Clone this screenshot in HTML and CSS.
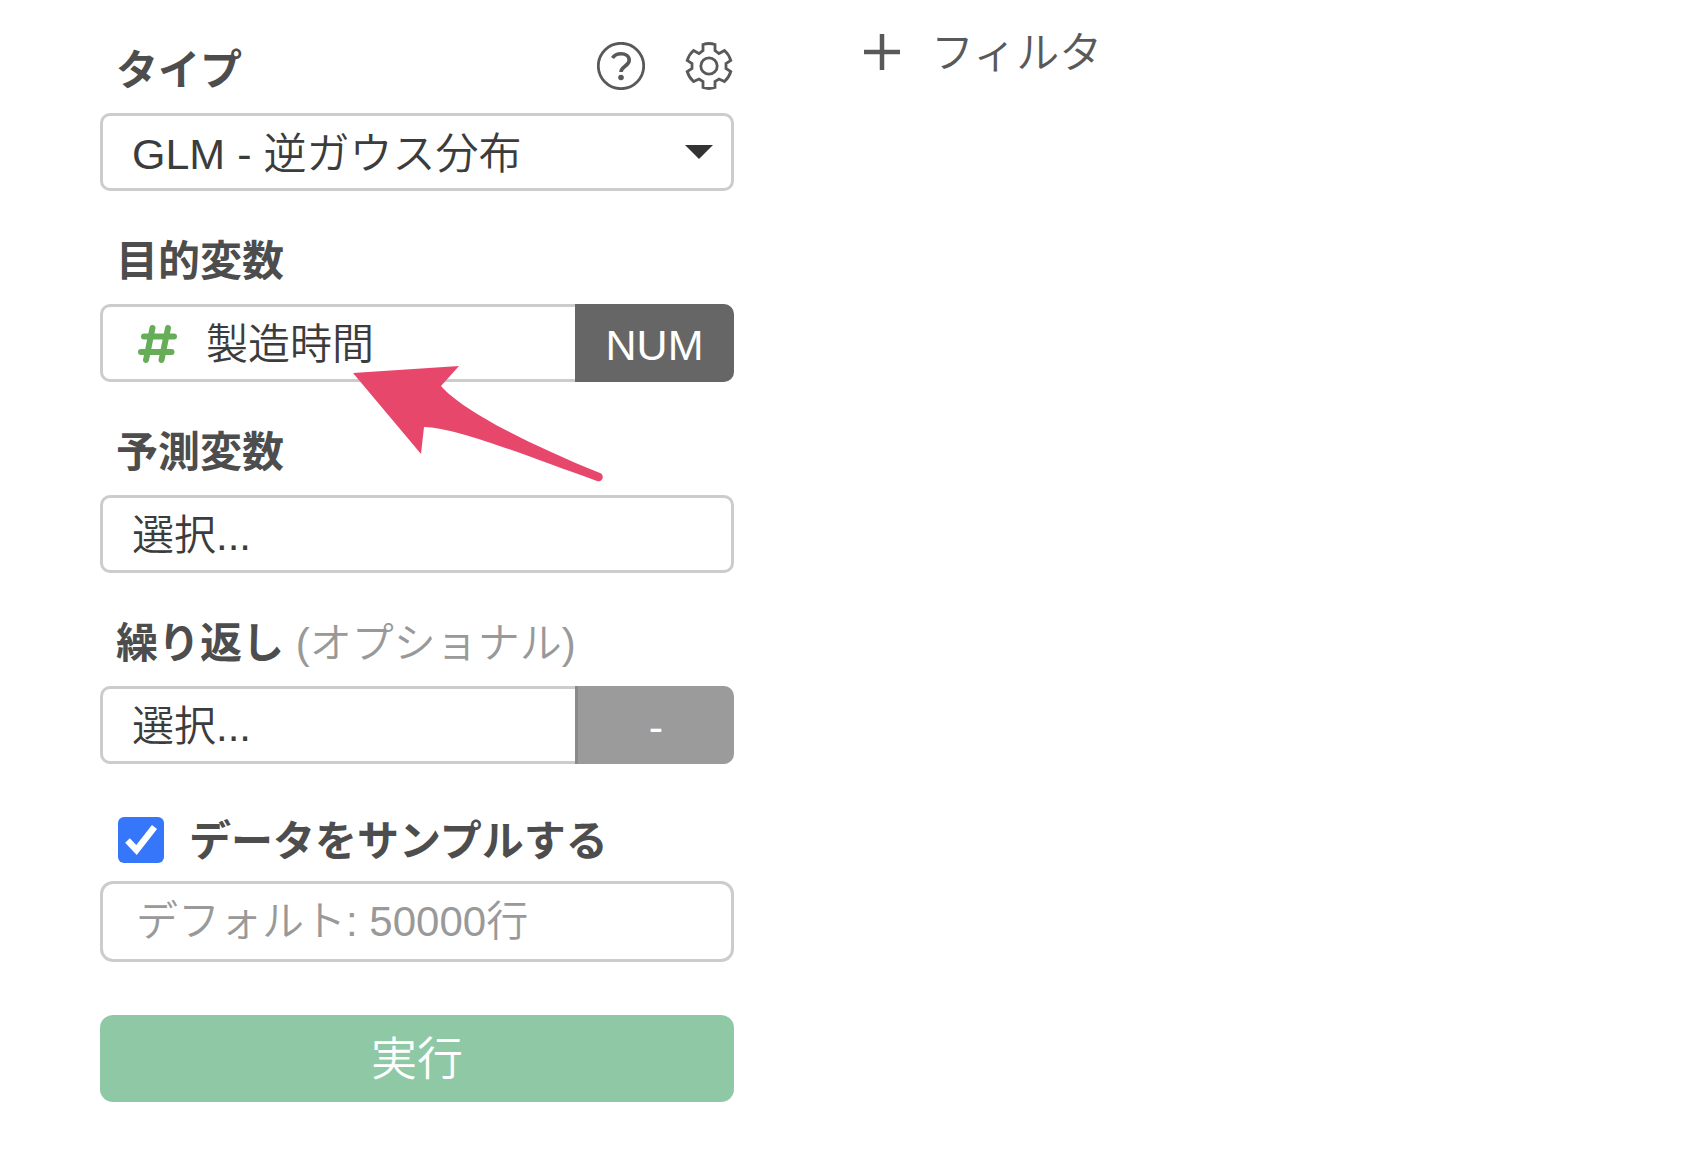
FILE: index.html
```html
<!DOCTYPE html>
<html lang="ja">
<head>
    <meta charset="UTF-8">
    <meta name="viewport" content="width=device-width, initial-scale=1.0">
    <title>GLM - 逆ガウス分布</title>
    <link rel="stylesheet" href="styles.css">
</head>
<body>
    <main class="page">
        <form class="panel">
            <div class="field">
                <div class="label-row">
                    <label class="label" for="type">タイプ</label>
                    <div class="tools">
                        <button type="button" class="icon-button" aria-label="ヘルプ">
                            <svg class="icon" viewBox="0 0 48 48">
                                <circle cx="24" cy="24" r="22.700"/>
                                <path d="M15.500 16C17.500 13 20.500 11.800 24 11.800C28.500 11.800 32.200 14.200 32.200 18.200C32.200 24 24 24.500 24 30" stroke-width="3.600"/>
                                <circle cx="24" cy="35.500" r="2.800" class="solid"/>
                            </svg>
                        </button>
                        <button type="button" class="icon-button" aria-label="設定">
                            <svg class="icon" viewBox="0 0 48 48">
                                <path d="M18 2.500Q24 .5 30 2.500V8.500L34 11.500L39.500 8.500Q44 12.500 45.800 18.500L41 21.500V26.500L45.800 29.500Q44 35.500 39.500 39.500L34 37L30 39.500V45.500Q24 47.500 18 45.500V39.500L14 37L8.500 39.500Q4 35.500 2.200 29.500L7 26.500V21.500L2.200 18.500Q4 12.500 8.500 8.500L14 11.500L18 8.500Z"/>
                                <circle cx="24" cy="24" r="8.200"/>
                            </svg>
                        </button>
                    </div>
                </div>
                <div class="select-wrap">
                    <select id="type" class="control">
                        <option>GLM - 逆ガウス分布</option>
                    </select>
                    <svg class="caret" viewBox="0 0 28 14"><path d="M0 0H28L14 14Z"/></svg>
                </div>
            </div>

            <div class="field">
                <div class="label-row">
                    <label class="label" for="target">目的変数</label>
                </div>
                <div class="group">
                    <button type="button" id="target" class="control column" aria-haspopup="listbox">
                        <svg class="hash" viewBox="0 0 40 40"><path d="M15.500 3L9 35M31 3L24.500 35M7 11.500H37M4 27H34.500"/></svg>
                        <span>製造時間</span>
                    </button>
                    <button type="button" class="tag">NUM</button>
                </div>
                <!-- pointer to the selected column -->
                <svg class="arrow" viewBox="0 0 252 118">
                    <path d="M0 7L106 0L88 20C108 43 168 75 247 107A4 4 0 0 1 244 115C168 88 105 62 71 61L68 88Z"/>
                </svg>
            </div>

            <div class="field">
                <div class="label-row">
                    <label class="label" for="predictors">予測変数</label>
                </div>
                <select id="predictors" class="control">
                    <option>選択...</option>
                </select>
            </div>

            <div class="field">
                <div class="label-row">
                    <label class="label" for="repeat">繰り返し <span class="optional">(オプショナル)</span></label>
                </div>
                <div class="group">
                    <select id="repeat" class="control">
                        <option>選択...</option>
                    </select>
                    <button type="button" class="tag tag-empty">-</button>
                </div>
            </div>

            <div class="field">
                <div class="check-row">
                    <span class="check">
                        <input type="checkbox" id="sample" checked>
                        <svg viewBox="0 0 46 46"><path d="M9.500 23.500L18.500 33L36.500 10"/></svg>
                    </span>
                    <label class="label" for="sample">データをサンプルする</label>
                </div>
                <input type="text" class="control rows" placeholder="デフォルト: 50000行" aria-label="行数">
            </div>

            <button type="submit" class="run">実行</button>
        </form>

        <section class="content">
            <button type="button" class="filter">
                <svg class="plus" viewBox="0 0 36 36"><path d="M18 0V36M0 18H36"/></svg>
                <span>フィルタ</span>
            </button>
        </section>
    </main>
</body>
</html>
```
FILE: styles.css
```css
* {
    box-sizing: border-box;
}
body {
    margin: 0;
    background-color: #fff;
    color: #3c3c3c;
    font-family: "Liberation Sans", "Noto Sans CJK JP", sans-serif;
    font-size: 42px;
    line-height: 48px;
}
button,
input,
select {
    font: inherit;
    color: inherit;
    margin: 0;
}
button {
    border: none;
    background: none;
    padding: 0;
    cursor: pointer;
}
.page {
    display: grid;
    grid-template-columns: minmax(0, 634px) 1fr;
    gap: 130px;
    padding: 0 100px 66px;
}
.panel {
    padding-top: 42px;
}
.field {
    position: relative;
    margin-bottom: 42px;
}
.label-row {
    display: flex;
    align-items: flex-end;
    justify-content: space-between;
    height: 53px;
    margin-bottom: 18px;
    padding: 0 1px 0 16px;
}
.label {
    color: #4d4d4d;
    font-weight: bold;
    white-space: nowrap;
}
.optional {
    color: #999;
    font-weight: 350;
}
.tools {
    display: flex;
    align-self: flex-start;
    gap: 40px;
}
.icon-button {
    display: flex;
}
.icon {
    width: 48px;
    height: 48px;
    fill: none;
    stroke: #595959;
    stroke-width: 2.8;
}
.icon .solid {
    fill: #595959;
    stroke: none;
}
.control {
    display: block;
    appearance: none;
    width: 100%;
    height: 78px;
    padding: 3px 29px 0;
    border: 3px solid #ccc;
    border-radius: 10px;
    background-color: #fff;
    font-weight: 350;
}
.select-wrap {
    position: relative;
}
.select-wrap .control {
    font-size: 43px;
}
.caret {
    position: absolute;
    top: 32px;
    right: 21px;
    width: 28px;
    height: 14px;
    fill: #333;
    pointer-events: none;
}
.group {
    display: flex;
}
.group .control {
    flex: 1;
    min-width: 0;
    border-right: none;
    border-radius: 10px 0 0 10px;
}
.column {
    display: flex;
    align-items: center;
    gap: 29px;
    padding-left: 34px;
}
.hash {
    width: 40px;
    height: 40px;
    fill: none;
    stroke: #65ad56;
    stroke-width: 6;
    stroke-linecap: round;
}
.tag {
    width: 159px;
    height: 78px;
    padding-top: 3px;
    border-radius: 0 10px 10px 0;
    background-color: #666;
    color: #fff;
    font-size: 43px;
}
.tag-empty {
    border-left: 3px solid #8a8a8a;
    background-color: #9b9b9b;
}
.arrow {
    position: absolute;
    top: 133px;
    left: 253px;
    z-index: 1;
    width: 252px;
    height: 118px;
    fill: #e8476c;
    pointer-events: none;
}
.check-row {
    display: flex;
    align-items: center;
    gap: 25px;
    height: 68px;
    margin-bottom: 7px;
    padding-left: 18px;
}
.check-row .label {
    padding-top: 3px;
}
.check {
    display: grid;
}
.check input {
    grid-area: 1 / 1;
    appearance: none;
    width: 46px;
    height: 46px;
    border-radius: 6px;
    background-color: #3576fb;
}
.check svg {
    grid-area: 1 / 1;
    width: 46px;
    height: 46px;
    fill: none;
    stroke: #fff;
    stroke-width: 6.5;
    pointer-events: none;
}
.rows {
    height: 81px;
    padding: 0 33px;
    border-radius: 13px;
}
.rows::placeholder {
    color: #999;
    opacity: 1;
}
.run {
    width: 100%;
    height: 87px;
    margin-top: 11px;
    border-radius: 13px;
    background-color: #8ec8a5;
    color: #fff;
    font-size: 46px;
    font-weight: 350;
}
.content {
    padding-top: 26px;
}
.filter {
    display: flex;
    align-items: center;
    gap: 31px;
    color: #595959;
    font-size: 43px;
    font-weight: 350;
}
.filter span {
    padding-top: 3px;
}
.plus {
    width: 36px;
    height: 36px;
    stroke: #595959;
    stroke-width: 4.5;
}
```
